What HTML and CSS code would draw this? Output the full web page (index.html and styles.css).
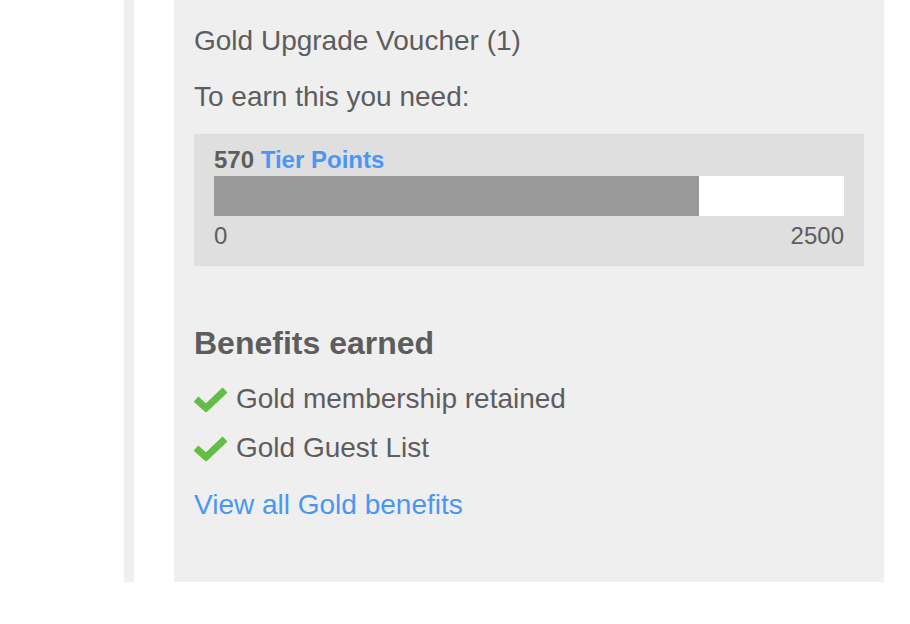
FILE: index.html
```html
<!DOCTYPE html>
<html lang="en">
<head>
    <meta charset="UTF-8">
    <meta name="viewport" content="width=device-width, initial-scale=1.0">
    <title>Tier Progress</title>
    <link rel="stylesheet" href="styles.css">
</head>
<body>
    <div class="page">
        <div class="rail"></div>

        <div class="panel">
            <p class="voucher">Gold Upgrade Voucher (1)</p>
            <p class="need">To earn this you need:</p>

            <div class="progress-box">
                <p class="points"><span class="count">570</span> <span class="unit">Tier Points</span></p>
                <div class="bar">
                    <div class="bar-fill" style="width: 77%"></div>
                </div>
                <div class="scale">
                    <span>0</span>
                    <span>2500</span>
                </div>
            </div>

            <h2 class="benefits-title">Benefits earned</h2>
            <ul class="benefits">
                <li>
                    <svg class="tick" viewBox="0 0 33 26" width="33" height="26">
                        <polyline points="2,13 12,22 31,4" fill="none" stroke="#62be44" stroke-width="7" stroke-linejoin="miter"/>
                    </svg>
                    Gold membership retained
                </li>
                <li>
                    <svg class="tick" viewBox="0 0 33 26" width="33" height="26">
                        <polyline points="2,13 12,22 31,4" fill="none" stroke="#62be44" stroke-width="7" stroke-linejoin="miter"/>
                    </svg>
                    Gold Guest List
                </li>
            </ul>
            <a class="all-benefits" href="#">View all Gold benefits</a>
        </div>
    </div>
</body>
</html>
```

FILE: styles.css
```css
body { margin: 0; padding: 0; background: #fff; font-family: "Liberation Sans", Arial, sans-serif; color: #5d5d5d; }
p, h2, ul { margin: 0; padding: 0; }

.page { display: flex; align-items: stretch; padding-left: 124px; }
.rail { width: 10px; background: #efefef; }
.panel { width: 710px; margin-left: 40px; box-sizing: border-box; padding: 25px 20px 61px; background: #efefef; font-size: 28px; line-height: 32px; }

.need { margin-top: 24px; }

.progress-box { margin-top: 21px; background: #dfdfdf; padding: 12px 20px 16px; font-size: 24px; line-height: 28px; }
.points { font-weight: bold; }
.points .unit { color: #4a96f6; }
.bar { margin-top: 2px; height: 40px; background: #fff; }
.bar-fill { height: 100%; background: #999; }
.scale { display: flex; justify-content: space-between; margin-top: 6px; }

.benefits-title { margin-top: 59px; font-size: 32px; line-height: 36px; font-weight: bold; }
.benefits { list-style: none; margin-top: 22px; display: flex; flex-direction: column; gap: 17px; }
.benefits li { display: flex; align-items: center; gap: 9px; }
.tick { display: block; flex-shrink: 0; }

.all-benefits { display: block; margin-top: 25px; color: #4a96f6; text-decoration: none; }
```
